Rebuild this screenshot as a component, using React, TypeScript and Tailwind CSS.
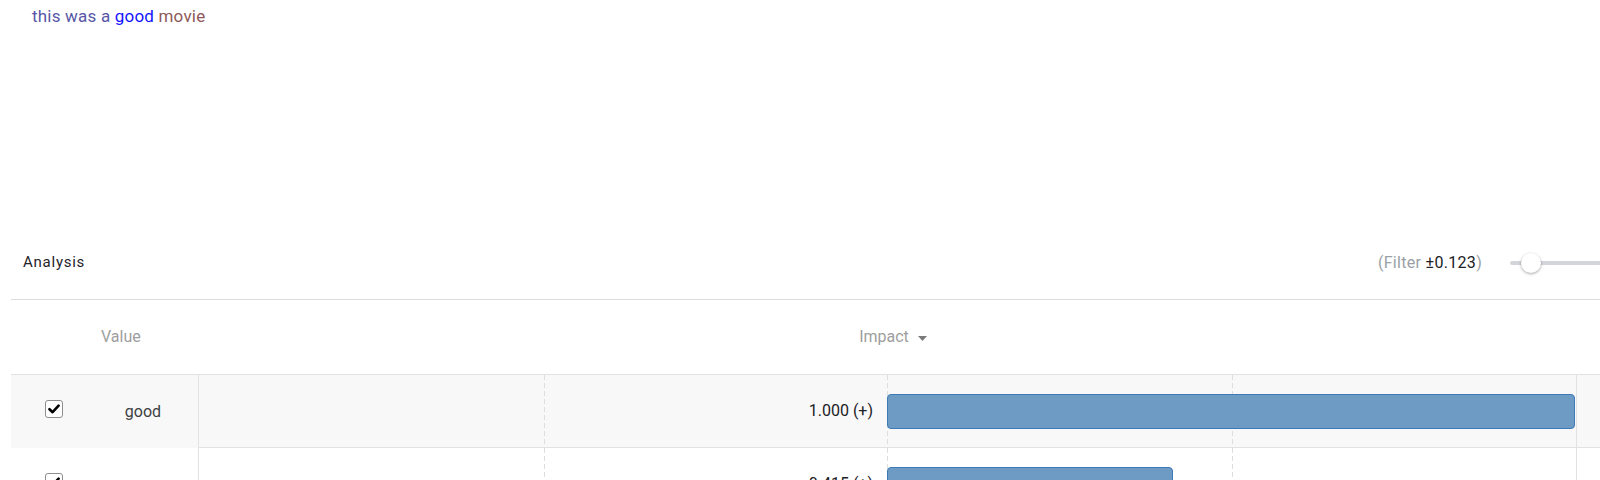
const TOKENS = [
  { text: 'this', color: 'text-[#5757a6]' },
  { text: 'was', color: 'text-[#5757a6]' },
  { text: 'a', color: 'text-[#5757a6]' },
  { text: 'good', color: 'text-[#1414ff]' },
  { text: 'movie', color: 'text-[#8e5858]' },
];

const ROWS = [
  { token: 'good', value: 1.0 },
  { token: 'was', value: 0.415 },
];

// impact column: 688px from zero to 1.0
const HALF = 688;

function CheckBox() {
  return (
    <div className="w-[18px] h-[18px] mb-[5px] rounded-[3px] border border-[#8d8d8d] bg-white flex items-center justify-center">
      <svg width="12" height="10" viewBox="0 0 12 10">
        <path d="M1.5 5.2 L4.6 8.2 L10.6 1.6" fill="none" stroke="#000" strokeWidth="2.6" strokeLinecap="round" strokeLinejoin="round" />
      </svg>
    </div>
  );
}

function GridLines() {
  return (
    <>
      {[345, 688, 1033].map(x => (
        <div
          key={x}
          className="absolute top-0 bottom-0 w-px bg-[repeating-linear-gradient(to_bottom,#dedede_0_5px,transparent_5px_8px)]"
          style={{ left: x }}
        />
      ))}
    </>
  );
}

function Row({ token, value, shaded }: { token: string; value: number; shaded: boolean }) {
  return (
    <div className={`flex h-[73px] ${shaded ? 'bg-[#f8f8f8]' : 'bg-white'}`}>
      <div className="w-[77px] flex items-center pl-[34px]">
        <CheckBox />
      </div>
      <div className="w-[110px] flex items-center justify-center text-base text-[#3c4043]">{token}</div>
      <div className="relative w-[1378px] border-l border-b border-[#e2e2e2] flex items-center">
        <GridLines />
        <div className="relative w-[688px] text-right pr-[14px] text-base text-[#202124]">
          {value.toFixed(3)} (+)
        </div>
        <div
          className="relative h-[35px] rounded-[4px] border border-[#3d7ab8] bg-[#6e9bc4]"
          style={{ width: value * HALF }}
        />
      </div>
      <div className="flex-1 border-l border-b border-[#e2e2e2]" />
    </div>
  );
}

export default function App() {
  return (
    <div className="w-[1600px] h-[480px] overflow-hidden bg-white font-['Roboto','Liberation_Sans',sans-serif]">
      <div className="h-[232px] pl-8 pt-[4px] text-[17px] leading-6 tracking-[0.2px]">
        {TOKENS.map((t, i) => (
          <span key={i} className={t.color}>
            {t.text}{i < TOKENS.length - 1 ? ' ' : ''}
          </span>
        ))}
      </div>

      <div className="ml-[11px] w-[1660px]">
        <div className="flex items-center h-[68px] pb-[6px] pl-3 pr-[11px] border-b border-[#dcdcdc]">
          <span className="text-[15px] tracking-[0.75px] text-[#1f2328]">Analysis</span>
          <span className="ml-auto text-base tracking-[0.3px] text-[#9aa0a6]">
            (Filter <span className="text-[#202124]">±0.123</span>)
          </span>
          <div className="relative ml-[28px] w-[150px] h-[22px] flex items-center">
            <div className="w-full h-[4px] rounded-full bg-[#d3d5da]" />
            <div className="absolute left-[11px] top-[1px] w-[20px] h-[20px] rounded-full bg-white shadow-[0_1px_3px_rgba(0,0,0,0.35)]" />
          </div>
        </div>

        <div className="flex h-[75px] border-b border-[#e2e2e2] text-base text-[#9e9e9e]">
          <div className="w-[77px]" />
          <div className="w-[110px] flex items-center pl-[13px]">Value</div>
          <div className="w-[1378px] flex items-center justify-center pl-[12px] gap-[9px]">
            <span>Impact</span>
            <svg width="9" height="5" viewBox="0 0 9 5" className="mt-[3px]">
              <path d="M0 0 L9 0 L4.5 5 Z" fill="#7a7a7a" />
            </svg>
          </div>
          <div className="flex-1" />
        </div>

        {ROWS.map((r, i) => (
          <Row key={r.token} token={r.token} value={r.value} shaded={i === 0} />
        ))}
      </div>
    </div>
  );
}
